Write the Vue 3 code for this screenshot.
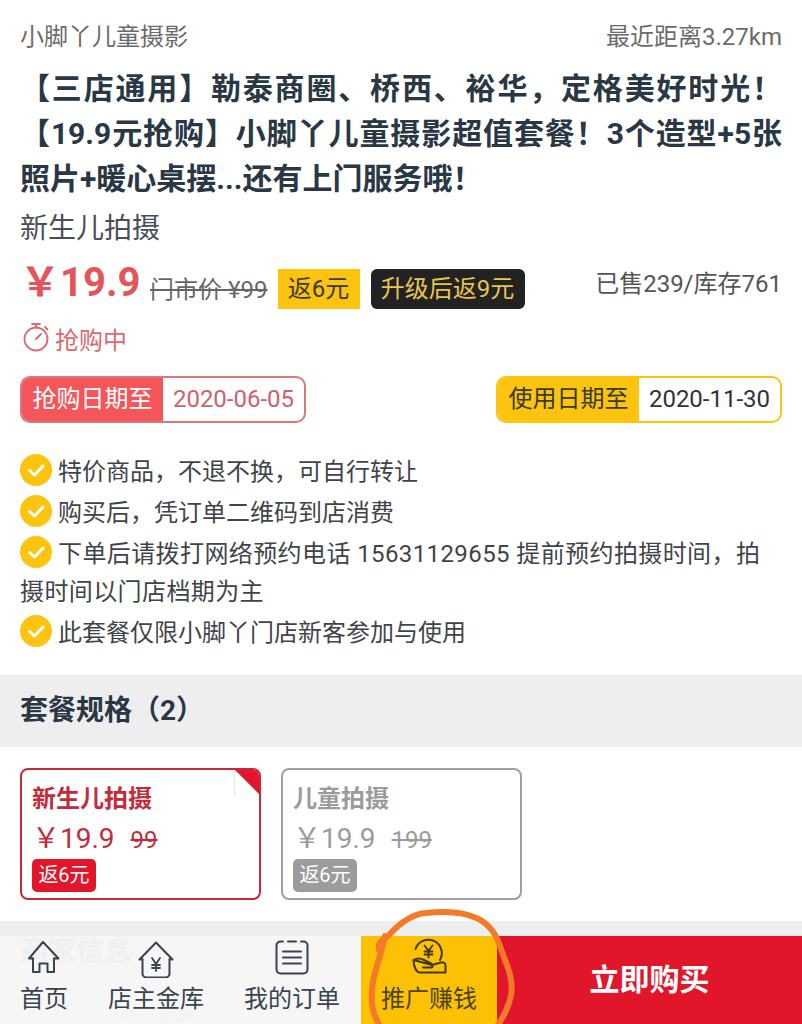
<script setup>
const notes = [
  '特价商品，不退不换，可自行转让',
  '购买后，凭订单二维码到店消费',
  '下单后请拨打网络预约电话 15631129655 提前预约拍摄时间，拍摄时间以门店档期为主',
  '此套餐仅限小脚丫门店新客参加与使用'
]
const specs = [
  { name: '新生儿拍摄', price: '￥19.9', old: '99', on: true },
  { name: '儿童拍摄', price: '￥19.9', old: '199', on: false }
]
</script>

<template>
  <div class="page">
    <main class="content">
      <div class="meta">
        <span>小脚丫儿童摄影</span>
        <span>最近距离3.27km</span>
      </div>
      <h1 class="title">
        <span class="line fill">【三店通用】勒泰商圈、桥西、裕华，定格美好时光！</span>
        <span class="line fill">【19.9元抢购】小脚丫儿童摄影超值套餐！3个造型+5张</span>
        <span class="line">照片+暖心桌摆...还有上门服务哦！</span>
      </h1>
      <div class="subtitle">新生儿拍摄</div>

      <div class="price-row">
        <span class="price"><span class="yen">￥</span>19.9</span>
        <s class="market">门市价 ¥99</s>
        <span class="rebate">返6元</span>
        <span class="upgrade">升级后返9元</span>
        <span class="sold">已售239/库存761</span>
      </div>

      <div class="status">
        <svg class="timer" width="26" height="30" viewBox="0 0 26 30" fill="none" stroke="#e0686a" stroke-width="1.8">
          <circle cx="13" cy="17" r="11.5" />
          <path d="M9 2h8M13 2v4M22 5l2.5 2.5M13 17l5-5" stroke-linecap="round" />
        </svg>
        <span>抢购中</span>
      </div>

      <div class="dates">
        <div class="date red">
          <span class="date-label">抢购日期至</span>
          <span class="date-value">2020-06-05</span>
        </div>
        <div class="date yellow">
          <span class="date-label">使用日期至</span>
          <span class="date-value">2020-11-30</span>
        </div>
      </div>

      <ul class="notes">
        <li v-for="n in notes" :key="n">
          <svg class="check" width="32" height="32" viewBox="0 0 32 32">
            <circle cx="16" cy="16" r="16" fill="#fcc30f" />
            <path d="M9.5 16.5l5 4.5 8.5-9" fill="none" stroke="#fff" stroke-width="3" stroke-linecap="round" stroke-linejoin="round" />
          </svg>
          <span class="note-text">{{ n }}</span>
        </li>
      </ul>
    </main>

    <h2 class="band">套餐规格（2）</h2>

    <div class="specs">
      <div v-for="s in specs" :key="s.name" class="spec" :class="{ on: s.on }">
        <div class="spec-name">{{ s.name }}</div>
        <div class="spec-price">{{ s.price }}<s>{{ s.old }}</s></div>
        <span class="spec-tag">返6元</span>
        <i v-if="s.on" class="corner"></i>
      </div>
    </div>

    <h2 class="band under">商家信息</h2>
    <div class="under-row">小脚丫儿童摄影</div>

    <nav class="bar">
      <a class="tab home">
        <svg width="34" height="36" viewBox="0 0 34 36" fill="none" stroke="#39444f" stroke-width="2" stroke-linejoin="round">
          <path d="M16 2L2 18.5l4-.2V32h6.5V23.5h8V32H27V18.3l4.5.2z" />
        </svg>
        <span>首页</span>
      </a>
      <a class="tab">
        <svg width="38" height="38" viewBox="0 0 38 38" fill="none" stroke="#39444f" stroke-width="2" stroke-linejoin="round" stroke-linecap="round">
          <path d="M19 2.5L2.5 19.5l3-.5v14.5a4 4 0 0 0 4 4h19a4 4 0 0 0 4-4V19l3 .5z" />
          <path d="M15 18l4 6 4-6M19 24v7M15 25h8M15 28h8" stroke-width="1.8" />
        </svg>
        <span>店主金库</span>
      </a>
      <a class="tab">
        <svg width="34" height="36" viewBox="0 0 34 36" fill="none" stroke="#39444f" stroke-width="2" stroke-linecap="round">
          <path d="M8 1.5H5.5a4 4 0 0 0-4 4v24a4 4 0 0 0 4 4h23a4 4 0 0 0 4-4v-24a4 4 0 0 0-4-4H26M13 1.5h8" />
          <path d="M8 11.5h18M8 17.5h18M8 23.5h18" />
        </svg>
        <span>我的订单</span>
      </a>
      <a class="tab promo">
        <svg width="38" height="38" viewBox="0 0 38 38" fill="none" stroke="#3f3a12" stroke-width="2" stroke-linecap="round" stroke-linejoin="round">
          <path d="M5.5 11A13.5 13.5 0 1 1 30 22" />
          <path d="M14.5 7.5l4 5.5 4-5.5M18.5 13v6.5M14.5 13.5h8M14.5 16.5h8" stroke-width="1.8" />
          <path d="M3.5 22C7 20 10 20 14 22l7 3.5c2 1 2 4 0 4h-8M22 27l9-2.5c3-.8 4.5 1 4.5 3V34.5H10C6 34.5 3.5 28 3.5 22z" />
        </svg>
        <span>推广赚钱</span>
      </a>
      <a class="buy">立即购买</a>
    </nav>

    <svg class="scribble" width="802" height="124" viewBox="0 900 802 124" fill="none">
      <path d="M379 950C377 941 384 940 389 935C398 925 410 914 426 913C446 911 470 911 486 924C498 934 500 948 505 960C512 976 514 990 509 1003C506 1012 503 1018 497 1026M385 936C382 952 376 966 373 982C370 998 371 1012 380 1026" stroke="#f47a28" stroke-width="6" stroke-linecap="round" />
    </svg>
  </div>
</template>

<style>
html, body { margin: 0; background: #fff; }
</style>

<style scoped>
.page {
  position: relative;
  width: 802px;
  height: 1024px;
  overflow: hidden;
  background: #fff;
  color: #3a3f45;
  font-family: Roboto, "Noto Sans CJK SC", sans-serif;
  font-size: 24px;
}
.content { padding: 20px 20px 0; }
.meta {
  display: flex;
  justify-content: space-between;
  height: 34px;
  line-height: 34px;
  color: #6b6b6b;
}
.title {
  margin: 12px 0 0;
  font-size: 30px;
  line-height: 45px;
  font-weight: 700;
  color: #2a3744;
}
.line { display: block; white-space: nowrap; }
.line.fill {
  white-space: normal;
  text-align: justify;
  text-align-last: justify;
}
.subtitle {
  margin-top: 8px;
  font-size: 28px;
  line-height: 40px;
  color: #4a4f55;
}
.price-row {
  display: flex;
  align-items: center;
  height: 40px;
  margin-top: 20px;
}
.price {
  width: 130px;
  color: #e4555a;
  font-size: 40px;
  font-weight: 700;
  line-height: 40px;
  margin-top: -12px;
  white-space: nowrap;
}
.yen { letter-spacing: -6px; margin-right: 6px; }
.market {
  font-size: 24px;
  color: #666;
  white-space: nowrap;
  margin-top: -3px;
}
.rebate {
  margin-left: 10px;
  width: 82px;
  height: 40px;
  line-height: 40px;
  text-align: center;
  background: #fcc30f;
  color: #3a3a2a;
}
.upgrade {
  margin-left: 11px;
  width: 154px;
  height: 40px;
  line-height: 40px;
  text-align: center;
  border-radius: 6px;
  background: #222;
  color: #e8c54f;
}
.sold { margin-left: auto; color: #555; margin-top: -16px; }
.status {
  display: flex;
  align-items: center;
  gap: 6px;
  height: 40px;
  margin-top: 9px;
  color: #e0686a;
}
.timer { margin-left: 3px; margin-top: -2px; }
.dates {
  display: flex;
  justify-content: space-between;
  margin-top: 18px;
}
.date {
  display: flex;
  box-sizing: border-box;
  width: 286px;
  height: 47px;
  line-height: 43px;
  border: 2px solid;
  border-radius: 10px;
  overflow: hidden;
}
.date-label {
  width: 141px;
  text-align: center;
}
.date-value { flex: 1; text-align: center; }
.red { border-color: #d9777c; }
.red .date-label { background: #f4565a; color: #fff; }
.red .date-value { color: #d0606a; }
.yellow { border-color: #fcc30f; }
.yellow .date-label { background: #fcc30f; color: #3a3a2a; }
.yellow .date-value { color: #333; }
.notes {
  list-style: none;
  margin: 30px 0 0;
  padding: 0;
}
.notes li {
  margin-bottom: 3px;
  line-height: 38px;
  color: #3f4449;
}
.notes li:nth-child(3) { letter-spacing: 0.4px; }
.check { vertical-align: -6px; margin-right: 6px; }
.band {
  box-sizing: border-box;
  height: 72px;
  margin: 23px 0 0;
  padding-left: 20px;
  background: #eee;
  font-size: 28px;
  font-weight: 700;
  line-height: 72px;
  color: #2a3744;
}
.specs {
  display: flex;
  gap: 20px;
  padding: 21px 20px;
}
.spec {
  position: relative;
  box-sizing: border-box;
  width: 241px;
  height: 132px;
  padding: 11px 10px 0;
  border: 2px solid #a0a0a0;
  border-radius: 8px;
  color: #9b9b9b;
  overflow: hidden;
}
.spec.on { border-color: #c42a3a; color: #c42a3a; }
.spec-name {
  font-weight: 700;
  line-height: 36px;
}
.spec-price {
  margin-top: 3px;
  font-size: 28px;
  line-height: 37px;
  white-space: nowrap;
}
.spec-price s { margin-left: 16px; font-size: 24px; }
.spec-tag {
  display: block;
  width: 64px;
  height: 33px;
  line-height: 33px;
  text-align: center;
  border-radius: 5px;
  background: #9c9c9c;
  color: #fff;
  font-size: 20px;
}
.spec.on .spec-tag { background: #e1162b; }
.corner {
  position: absolute;
  top: 0;
  right: 0;
  width: 0;
  height: 0;
  border-top: 24px solid #e1162b;
  border-left: 24px solid transparent;
}
.corner::after {
  content: "";
  position: absolute;
  top: -24px;
  left: -25px;
  width: 1px;
  height: 26px;
  background: #e6e6e6;
}
.under {
  height: 89px;
  margin: 0;
  line-height: 62px;
  color: #33404c;
}
.under-row {
  padding-left: 112px;
  font-size: 12px;
  line-height: 14px;
  color: #555;
}
.bar {
  position: absolute;
  left: 0;
  right: 0;
  bottom: 0;
  display: flex;
  height: 88px;
  background: rgba(246, 246, 246, 0.97);
}
.tab {
  display: flex;
  flex-direction: column;
  align-items: center;
  width: 136px;
  padding-top: 4px;
  box-sizing: border-box;
  color: #39444f;
}
.tab span { margin-top: auto; line-height: 34px; padding-bottom: 8px; }
.tab.home { width: 88px; }
.promo { margin-left: 1px; padding-top: 2px; background: #fcc005; color: #4a4416; }
.buy {
  flex: 1;
  background: #e1162b;
  color: #fff;
  font-size: 30px;
  font-weight: 700;
  line-height: 88px;
  text-align: center;
}
.scribble {
  position: absolute;
  left: 0;
  bottom: 0;
  pointer-events: none;
}
</style>
